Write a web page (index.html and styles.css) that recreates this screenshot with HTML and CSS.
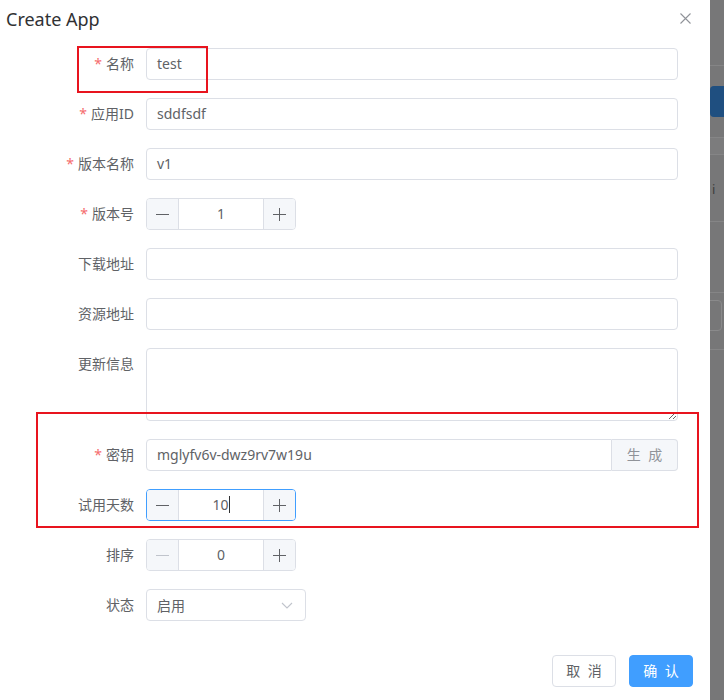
FILE: index.html
```html
<!DOCTYPE html>
<html>
<head>
    <meta charset="UTF-8">
    <title>Create App</title>
    <link rel="stylesheet" href="styles.css">
</head>
<body>
<div id="screen">
    <div id="dialog">
        <div class="dialog-header">
            <span class="dialog-title">Create App</span>
            <span class="dialog-close">
                <svg width="11" height="11" viewBox="0 0 11 11"><path d="M0.5 0.5L10.5 10.5M10.5 0.5L0.5 10.5" stroke="#909399" stroke-width="1.1" fill="none"/></svg>
            </span>
        </div>

        <div class="form">
            <div class="row">
                <label class="required">名称</label>
                <div class="input"><span>test</span></div>
            </div>
            <div class="row">
                <label class="required">应用ID</label>
                <div class="input"><span>sddfsdf</span></div>
            </div>
            <div class="row">
                <label class="required">版本名称</label>
                <div class="input"><span>v1</span></div>
            </div>
            <div class="row">
                <label class="required">版本号</label>
                <div class="number">
                    <span class="step minus"><svg width="13" height="13" viewBox="0 0 13 13"><path d="M0 6.5H13"/></svg></span>
                    <span class="value">1</span>
                    <span class="step plus"><svg width="13" height="13" viewBox="0 0 13 13"><path d="M0 6.5H13M6.5 0V13"/></svg></span>
                </div>
            </div>
            <div class="row">
                <label>下载地址</label>
                <div class="input"></div>
            </div>
            <div class="row">
                <label>资源地址</label>
                <div class="input"></div>
            </div>
            <div class="row row-top">
                <label>更新信息</label>
                <textarea class="textarea"></textarea>
            </div>
            <div class="row">
                <label class="required">密钥</label>
                <div class="input-group">
                    <div class="input"><span>mglyfv6v-dwz9rv7w19u</span></div>
                    <span class="append">生 成</span>
                </div>
            </div>
            <div class="row">
                <label>试用天数</label>
                <div class="number focused">
                    <span class="step minus"><svg width="13" height="13" viewBox="0 0 13 13"><path d="M0 6.5H13"/></svg></span>
                    <span class="value">10<i class="caret"></i></span>
                    <span class="step plus"><svg width="13" height="13" viewBox="0 0 13 13"><path d="M0 6.5H13M6.5 0V13"/></svg></span>
                </div>
            </div>
            <div class="row">
                <label>排序</label>
                <div class="number">
                    <span class="step minus disabled"><svg width="13" height="13" viewBox="0 0 13 13"><path d="M0 6.5H13"/></svg></span>
                    <span class="value">0</span>
                    <span class="step plus"><svg width="13" height="13" viewBox="0 0 13 13"><path d="M0 6.5H13M6.5 0V13"/></svg></span>
                </div>
            </div>
            <div class="row">
                <label>状态</label>
                <div class="select">
                    <span>启用</span>
                    <svg width="12" height="7" viewBox="0 0 12 7"><path d="M1 1L6 6L11 1" stroke="#c0c4cc" stroke-width="1.1" fill="none"/></svg>
                </div>
            </div>
        </div>

        <div class="dialog-footer">
            <span class="btn">取 消</span>
            <span class="btn btn-primary">确 认</span>
        </div>

        <!-- annotation frames -->
        <div class="mark mark-name"></div>
        <div class="mark mark-key"></div>
    </div>

    <div id="backdrop">
        <div class="bd-block bd-top"></div>
        <div class="bd-block bd-gap1"></div>
        <div class="bd-button"></div>
        <div class="bd-block bd-gap2"></div>
        <div class="bd-block bd-band"></div>
        <div class="bd-block bd-text"><span>i</span></div>
        <div class="bd-block bd-row"></div>
        <div class="bd-box"></div>
        <div class="bd-block bd-rest"></div>
    </div>
</div>
</body>
</html>
```

FILE: styles.css
```css
*{
    box-sizing: border-box;
}
body{
    margin: 0;
    font-family: "Noto Sans", "Noto Sans CJK SC", sans-serif;
    font-size: 14px;
    color: #606266;
    background: #fff;
}
#screen{
    display: flex;
    width: 724px;
    height: 700px;
    overflow: hidden;
}
#dialog{
    position: relative;
    width: 710px;
    height: 700px;
    background: #fff;
}
.dialog-header{
    display: flex;
    justify-content: space-between;
    height: 48px;
    padding: 6px 0 0 6px;
}
.dialog-title{
    font-size: 18px;
    line-height: 26px;
    color: #303133;
}
.dialog-close{
    margin: 3px 19px 0 0;
}

.form{
    display: flex;
    flex-direction: column;
    gap: 18px;
}
.row{
    display: grid;
    grid-template-columns: 134px 532px;
    column-gap: 12px;
    align-items: center;
}
.row-top{
    align-items: start;
}
.row label{
    text-align: right;
    color: #606266;
    line-height: 32px;
}
.row label.required::before{
    content: "*";
    color: #f56c6c;
    margin-right: 4px;
}

.input{
    height: 32px;
    border: 1px solid #dcdfe6;
    border-radius: 4px;
    padding: 0 10px;
    line-height: 30px;
    color: #606266;
}
.textarea{
    display: block;
    width: 532px;
    height: 73px;
    margin: 0;
    border: 1px solid #dcdfe6;
    border-radius: 4px;
    background: #fff;
}
.input-group{
    display: flex;
}
.input-group .input{
    flex: 1;
    border-radius: 4px 0 0 4px;
}
.append{
    width: 66px;
    height: 32px;
    line-height: 30px;
    text-align: center;
    letter-spacing: 2px;
    padding-left: 2px;
    background: #f5f7fa;
    border: 1px solid #dcdfe6;
    border-left: 0;
    border-radius: 0 4px 4px 0;
    color: #909399;
}

.number{
    display: flex;
    width: 150px;
    height: 32px;
    border: 1px solid #dcdfe6;
    border-radius: 4px;
    overflow: hidden;
}
.number.focused{
    border-color: #409eff;
}
.step{
    display: flex;
    align-items: center;
    justify-content: center;
    width: 32px;
    background: #f5f7fa;
}
.step svg path{
    stroke: #606266;
    stroke-width: 1;
    fill: none;
}
.step.disabled svg path{
    stroke: #c0c4cc;
}
.step.minus{
    border-right: 1px solid #dcdfe6;
}
.step.plus{
    border-left: 1px solid #dcdfe6;
}
.value{
    flex: 1;
    text-align: center;
    line-height: 30px;
    color: #606266;
}
.caret{
    display: inline-block;
    width: 1px;
    height: 17px;
    background: #303133;
    vertical-align: -3px;
}

.select{
    display: flex;
    align-items: center;
    justify-content: space-between;
    width: 160px;
    height: 32px;
    border: 1px solid #dcdfe6;
    border-radius: 4px;
    padding: 0 12px 0 10px;
    color: #606266;
}

.dialog-footer{
    display: flex;
    justify-content: flex-end;
    gap: 13px;
    margin: 34px 17px 0 0;
}
.btn{
    width: 64px;
    height: 32px;
    line-height: 30px;
    text-align: center;
    border: 1px solid #dcdfe6;
    border-radius: 4px;
    color: #606266;
    font-size: 14px;
    letter-spacing: 2px;
    padding-left: 2px;
}
.btn-primary{
    background: #409eff;
    border-color: #409eff;
    color: #fff;
}

/* red frames drawn over the form */
.mark{
    position: absolute;
    border: 2px solid #e8141e;
}
.mark-name{
    left: 77px;
    top: 46px;
    width: 131px;
    height: 47px;
}
.mark-key{
    left: 36px;
    top: 412px;
    width: 663px;
    height: 116px;
}

/* dimmed page behind the dialog */
#backdrop{
    width: 14px;
    height: 700px;
    background: #777778;
    display: flex;
    flex-direction: column;
}
.bd-block{
    border-bottom: 1px solid #858586;
}
.bd-top{
    height: 66px;
}
.bd-gap1{
    height: 20px;
    border: 0;
}
.bd-button{
    height: 31px;
    background: #1f4f80;
    border-radius: 4px 0 0 4px;
}
.bd-gap2{
    height: 21px;
}
.bd-band{
    height: 17px;
    background: #7c7c7d;
}
.bd-text{
    height: 67px;
    padding: 26px 0 0 2px;
    color: #3d3d3d;
    font-size: 13px;
    line-height: 16px;
}
.bd-row{
    height: 71px;
}
.bd-box{
    height: 31px;
    margin: 7px 2px 0 -4px;
    border: 1px solid #8a8a8b;
    border-radius: 4px;
}
.bd-rest{
    height: 19px;
}
```
